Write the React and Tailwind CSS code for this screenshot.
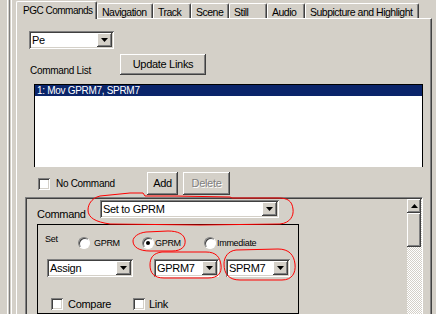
import React from "react";

const RAISED =
  "shadow-[inset_-1px_-1px_#404040,inset_1px_1px_#ffffff,inset_-2px_-2px_#808080,inset_2px_2px_#d4d0c8]";
const SUNKEN =
  "shadow-[inset_1px_1px_#808080,inset_-1px_-1px_#ffffff,inset_2px_2px_#404040,inset_-2px_-2px_#d4d0c8]";

function Down() {
  return (
    <svg width="7" height="4" viewBox="0 0 7 4">
      <path d="M0 0H7L3.5 4Z" fill="#000" />
    </svg>
  );
}

function Combo({ text, className }) {
  return (
    <div className={`flex bg-white p-[2px] ${SUNKEN} ${className}`}>
      <span className="flex-1 pl-[1px] text-[11px] leading-[14px] whitespace-nowrap overflow-hidden">
        {text}
      </span>
      <span className={`flex h-full w-[15px] items-center justify-center bg-[#d4d0c8] ${RAISED}`}>
        <Down />
      </span>
    </div>
  );
}

function Check({ className }) {
  return <span className={`block h-[12px] w-[12px] bg-white ${SUNKEN} ${className}`} />;
}

function Radio({ checked, className }) {
  return (
    <span
      className={`flex h-[12px] w-[12px] items-center justify-center rounded-full border border-t-[#808080] border-l-[#808080] border-b-white border-r-white bg-white shadow-[inset_1px_1px_#404040] ${className}`}
    >
      {checked && <span className="block h-[4px] w-[4px] rounded-full bg-black" />}
    </span>
  );
}

function Tab({ label, w, active }) {
  if (active) {
    return (
      <div
        className={`relative z-10 h-[18px] ${w} rounded-tl-[2px] rounded-tr-[2px] border-l border-t border-r border-white border-r-[#404040] bg-[#d4d0c8] pl-[6px] pt-[3px] text-[10px] leading-[12px] tracking-[-0.5px] whitespace-nowrap shadow-[inset_-1px_0_#808080]`}
      >
        {label}
      </div>
    );
  }
  return (
    <div
      className={`h-[16px] ${w} rounded-tl-[2px] rounded-tr-[2px] border-l border-t border-r border-white border-r-[#404040] bg-[#d4d0c8] pl-[4px] pt-[2px] text-[10.5px] leading-[12px] tracking-[-0.5px] whitespace-nowrap shadow-[inset_-1px_0_#808080]`}
    >
      {label}
    </div>
  );
}

export default function App() {
  return (
    <div className="relative flex h-[314px] w-[436px] overflow-hidden bg-[#d4d0c8] font-['Liberation_Sans',Arial,sans-serif] tracking-[-0.3px] text-black">
      {/* left window edges */}
      <div className="flex w-[16px] shrink-0">
        <div className="ml-[7px] h-full w-px bg-white" />
        <div className="ml-[1px] h-full w-px bg-[#808080]" />
        <div className="ml-[1px] h-full w-px bg-white" />
      </div>

      {/* tab control */}
      <div className="flex w-[416px] shrink-0 flex-col">
        <div className="flex h-[20px] items-end">
          <Tab label="PGC Commands" w="w-[81px]" active />
          <Tab label="Navigation" w="w-[56px]" />
          <Tab label="Track" w="w-[38px]" />
          <Tab label="Scene" w="w-[38px]" />
          <Tab label="Still" w="w-[38px]" />
          <Tab label="Audio" w="w-[38px]" />
          <Tab label="Subpicture and Highlight" w="w-[114px]" />
        </div>

        <div className="relative -mt-px flex flex-1 flex-col border-l border-t border-r border-white border-r-[#404040] shadow-[inset_-1px_0_#808080]">
          <Combo text="Pe" className="ml-[12px] mt-[12px] h-[18px] w-[85px]" />

          <div className="mt-[5px] flex">
            <div className="ml-[13px] w-[90px] pt-[11px] text-[10px] leading-[12px]">Command List</div>
            <div
              className={`flex h-[21px] w-[86px] items-center justify-center text-[11px] ${RAISED}`}
            >
              Update Links
            </div>
          </div>

          <div className="ml-[17px] mt-[7px] h-[83px] w-[389px] border-l border-t border-r border-black bg-white">
            <div className="h-[11px] bg-[#0a246a] pl-[2px] text-[10px] leading-[11px] text-white">
              1: Mov GPRM7, SPRM7
            </div>
          </div>

          <div className="mt-[5px] flex h-[23px] items-center">
            <div className="ml-[21px] flex w-[109px] items-center">
              <Check />
              <span className="ml-[6px] text-[10px] leading-[12px]">No Command</span>
            </div>
            <div className={`flex h-[23px] w-[31px] items-center justify-center text-[11px] ${RAISED}`}>
              Add
            </div>
            <div
              className={`ml-[5px] flex h-[23px] w-[47px] items-center justify-center text-[11px] text-[#808080] [text-shadow:1px_1px_#ffffff] ${RAISED}`}
            >
              Delete
            </div>
          </div>

          {/* lower scrolling panel */}
          <div className="ml-[8px] mt-[2px] flex w-[398px] flex-1 border-l border-t border-r border-[#808080] border-r-white">
            <div className="flex flex-1 border-l border-t border-[#404040]">
              <div className="flex w-[380px] flex-col">
                <div className="flex items-start">
                  <div className="ml-[10px] mt-[9px] w-[63px] text-[11px] leading-[12px]">Command</div>
                  <Combo text="Set to GPRM" className="mt-[1px] h-[18px] w-[179px]" />
                </div>

                <div className="ml-[10px] mt-[4px] flex h-[90px] w-[262px] flex-col border border-black">
                  <div className="mt-[12px] flex h-[12px] items-center text-[9px] leading-[10px]">
                    <span className="relative -top-[4px] ml-[7px] w-[33px]">Set</span>
                    <Radio />
                    <span className="ml-[4px] w-[48px]">GPRM</span>
                    <Radio checked />
                    <span className="ml-[1px] w-[49px]">GPRM</span>
                    <Radio />
                    <span className="ml-[1px]">Immediate</span>
                  </div>

                  <div className="mt-[10px] flex">
                    <Combo text="Assign" className="ml-[9px] h-[18px] w-[86px]" />
                    <Combo text="GPRM7" className="ml-[21px] h-[18px] w-[65px]" />
                    <Combo text="SPRM7" className="ml-[7px] h-[18px] w-[64px]" />
                  </div>

                  <div className="mt-[21px] flex items-center text-[11px] leading-[12px]">
                    <Check className="ml-[13px]" />
                    <span className="ml-[5px] w-[65px]">Compare</span>
                    <Check />
                    <span className="ml-[4px]">Link</span>
                  </div>
                </div>
              </div>

              {/* scrollbar */}
              <div className="flex w-[15px] flex-col bg-[image:repeating-conic-gradient(#ffffff_0%_25%,#d4d0c8_0%_50%)] bg-[length:2px_2px]">
                <div className={`flex h-[14px] w-[14px] items-center justify-center bg-[#d4d0c8] ${RAISED}`}>
                  <svg width="7" height="4" viewBox="0 0 7 4">
                    <path d="M0 4H7L3.5 0Z" fill="#000" />
                  </svg>
                </div>
                <div className={`h-[34px] w-[14px] bg-[#d4d0c8] ${RAISED}`} />
              </div>
            </div>
          </div>
        </div>
      </div>

      {/* red hand-drawn annotations */}
      <svg
        className="pointer-events-none absolute left-0 top-0"
        width="436"
        height="314"
        viewBox="0 0 436 314"
        fill="none"
        stroke="#ff0000"
        strokeWidth="1"
      >
        <path d="M97 197 C 92 199, 88 204, 88 210 C 88 218, 96 222, 110 224 L 200 225 L 280 224 C 290 223, 294 216, 293 209 C 292 201, 288 198, 278 198 L 232 198 L 230 197 L 175 196 L 145 196 L 143 193 L 130 193 L 100 196 Z" />
        <path d="M146 232 C 138 233, 133 237, 133 241 C 133 247, 139 251, 150 251 L 172 251 C 182 251, 186 246, 185 240 C 184 234, 178 231, 168 231 Z" />
        <path d="M162 252 C 153 253, 150 258, 150 265 C 150 273, 154 278, 164 278 L 208 278 C 218 278, 222 273, 221 265 C 220 257, 216 252, 206 252 Z" />
        <path d="M236 250 C 228 251, 224 257, 224 264 C 224 274, 229 280, 240 280 L 282 280 C 292 280, 296 273, 295 264 C 294 255, 289 249, 278 249 Z" />
      </svg>
    </div>
  );
}
